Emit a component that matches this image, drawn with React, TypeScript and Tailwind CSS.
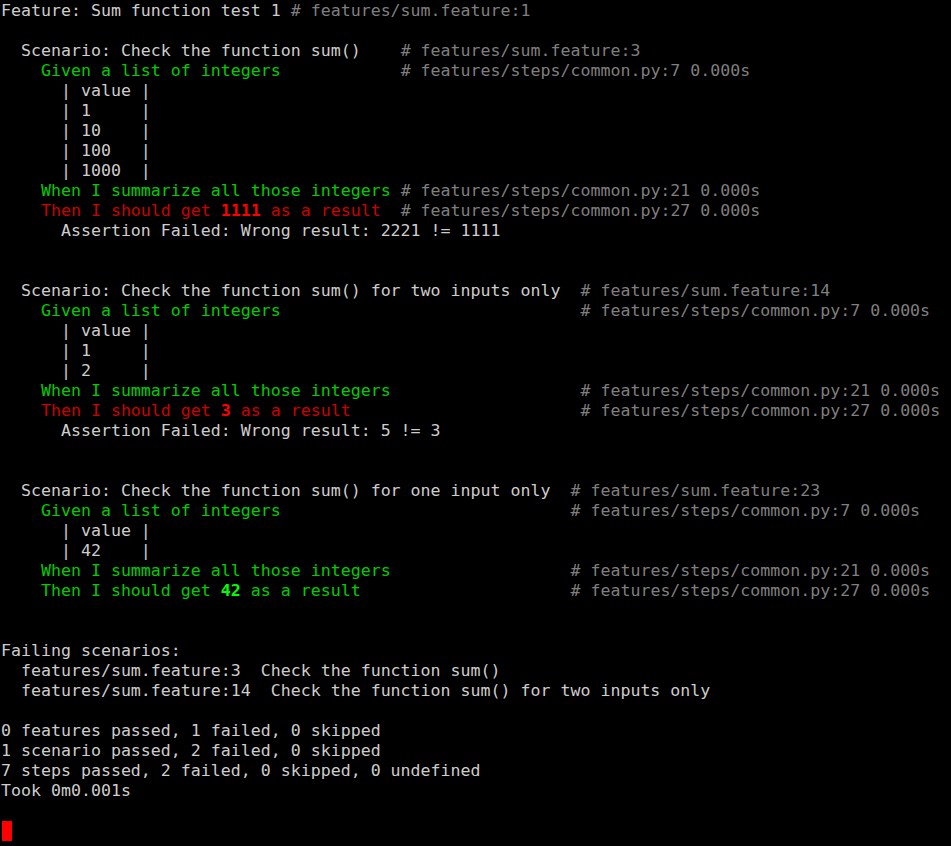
type Seg = [string, keyof typeof tone];

const tone = {
  w: 'text-[#cdcdcd]',
  c: 'text-[#7f7f7f]',
  g: 'text-[#00cd00]',
  r: 'text-[#cd0000]',
  G: 'text-[#00ff00] font-bold',
  R: 'text-[#ff0000] font-bold',
};

const step = (s: string, k: 'g' | 'r', pad: number, loc: string): Seg[] => [
  [s.padEnd(pad, ' '), k],
  [loc, 'c'],
];

const lines: Seg[][] = [
  [['Feature: Sum function test 1 ', 'w'], ['# features/sum.feature:1', 'c']],
  [],
  [['  Scenario: Check the function sum()    ', 'w'], ['# features/sum.feature:3', 'c']],
  step('    Given a list of integers', 'g', 40, '# features/steps/common.py:7 0.000s'),
  [['      | value |', 'w']],
  [['      | 1     |', 'w']],
  [['      | 10    |', 'w']],
  [['      | 100   |', 'w']],
  [['      | 1000  |', 'w']],
  step('    When I summarize all those integers', 'g', 40, '# features/steps/common.py:21 0.000s'),
  [['    Then I should get ', 'r'], ['1111', 'R'], [' as a result  ', 'r'], ['# features/steps/common.py:27 0.000s', 'c']],
  [['      Assertion Failed: Wrong result: 2221 != 1111', 'w']],
  [],
  [],
  [['  Scenario: Check the function sum() for two inputs only  ', 'w'], ['# features/sum.feature:14', 'c']],
  step('    Given a list of integers', 'g', 58, '# features/steps/common.py:7 0.000s'),
  [['      | value |', 'w']],
  [['      | 1     |', 'w']],
  [['      | 2     |', 'w']],
  step('    When I summarize all those integers', 'g', 58, '# features/steps/common.py:21 0.000s'),
  [['    Then I should get ', 'r'], ['3', 'R'], [' as a result'.padEnd(35, ' '), 'r'], ['# features/steps/common.py:27 0.000s', 'c']],
  [['      Assertion Failed: Wrong result: 5 != 3', 'w']],
  [],
  [],
  [['  Scenario: Check the function sum() for one input only  ', 'w'], ['# features/sum.feature:23', 'c']],
  step('    Given a list of integers', 'g', 57, '# features/steps/common.py:7 0.000s'),
  [['      | value |', 'w']],
  [['      | 42    |', 'w']],
  step('    When I summarize all those integers', 'g', 57, '# features/steps/common.py:21 0.000s'),
  [['    Then I should get ', 'g'], ['42', 'G'], [' as a result'.padEnd(33, ' '), 'g'], ['# features/steps/common.py:27 0.000s', 'c']],
  [],
  [],
  [['Failing scenarios:', 'w']],
  [['  features/sum.feature:3  Check the function sum()', 'w']],
  [['  features/sum.feature:14  Check the function sum() for two inputs only', 'w']],
  [],
  [['0 features passed, 1 failed, 0 skipped', 'w']],
  [['1 scenario passed, 2 failed, 0 skipped', 'w']],
  [['7 steps passed, 2 failed, 0 skipped, 0 undefined', 'w']],
  [['Took 0m0.001s', 'w']],
  [],
];

export default function App() {
  return (
    <div className="w-[951px] h-[846px] overflow-hidden bg-black pl-[1px] pt-[1px] font-['DejaVu_Sans_Mono',monospace] text-[16.6px] leading-[20px]">
      {lines.map((segs, i) => (
        <div key={i} className="h-[20px] whitespace-pre">
          {segs.map(([t, k], j) => (
            <span key={j} className={tone[k]}>
              {t}
            </span>
          ))}
        </div>
      ))}
      {/* cursor */}
      <div className="h-[20px] flex">
        <div className="ml-[1px] w-[10px] h-[20px] bg-[#ff0000]" />
      </div>
    </div>
  );
}
